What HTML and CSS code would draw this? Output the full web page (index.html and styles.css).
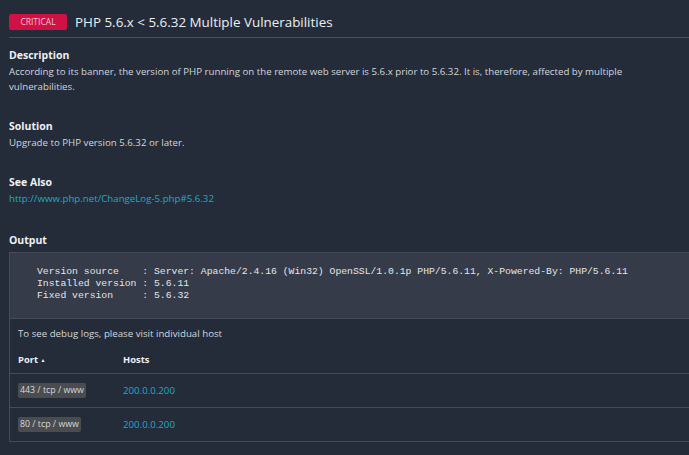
FILE: index.html
```html
<!DOCTYPE html>
<html>
<head>
<meta charset="utf-8">
<link rel="stylesheet" href="styles.css">
</head>
<body>
<div class="page">
  <div class="header">
    <span class="badge">CRITICAL</span>
    <h1 class="title">PHP 5.6.x &lt; 5.6.32 Multiple Vulnerabilities</h1>
  </div>

  <section class="section sec-desc">
    <h2 class="heading">Description</h2>
    <p class="text">According to its banner, the version of PHP running on the remote web server is 5.6.x prior to 5.6.32. It is, therefore, affected by multiple<br>vulnerabilities.</p>
  </section>

  <section class="section sec-sol">
    <h2 class="heading">Solution</h2>
    <p class="text">Upgrade to PHP version 5.6.32 or later.</p>
  </section>

  <section class="section sec-see">
    <h2 class="heading">See Also</h2>
    <p class="text"><a class="link" href="#">http://www.php.net/ChangeLog-5.php#5.6.32</a></p>
  </section>

  <section class="section sec-out">
    <h2 class="heading">Output</h2>
    <div class="output">
<pre class="code">Version source    : Server: Apache/2.4.16 (Win32) OpenSSL/1.0.1p PHP/5.6.11, X-Powered-By: PHP/5.6.11
Installed version : 5.6.11
Fixed version     : 5.6.32</pre>
      <div class="hostbox">
        <p class="note">To see debug logs, please visit individual host</p>
        <div class="table">
          <div class="row head">
            <div class="col-port">Port <span class="sort">&#9650;</span></div>
            <div class="col-host">Hosts</div>
          </div>
          <div class="row">
            <div class="col-port"><span class="port">443 / tcp / www</span></div>
            <div class="col-host"><a class="link" href="#">200.0.0.200</a></div>
          </div>
          <div class="row">
            <div class="col-port"><span class="port">80 / tcp / www</span></div>
            <div class="col-host"><a class="link" href="#">200.0.0.200</a></div>
          </div>
        </div>
      </div>
    </div>
  </section>
</div>
</body>
</html>
```

FILE: styles.css
```css
html, body {
  margin: 0;
  padding: 0;
  background: #242c3a;
  overflow: hidden;
}
body {
  font-family: "Open Sans", "Noto Sans", sans-serif;
  color: #d8dbe0;
}
.page {
  width: 800px;
  padding-left: 9px;
}
.header {
  display: flex;
  align-items: center;
  height: 38px;
  border-bottom: 1px solid #48505c;
  box-sizing: border-box;
  padding-top: 6px;
}
.badge {
  display: inline-flex;
  align-items: center;
  justify-content: center;
  width: 58px;
  height: 16px;
  background: #d01146;
  color: #f1c6d2;
  font-size: 8.5px;
  border-radius: 2px;
}
.title {
  margin: 0 0 0 8px;
  font-size: 13.4px;
  font-weight: 400;
  color: #eceef1;
}
.section {
  margin: 0;
}
.heading {
  margin: 0;
  font-size: 10.5px;
  font-weight: 700;
  color: #eef0f3;
  line-height: 16px;
}
.text {
  margin: 1px 0 0;
  font-size: 9.7px;
  line-height: 15px;
  color: #d3d6db;
}
.sec-desc { padding-top: 9px; }
.sec-sol { padding-top: 24px; }
.sec-see { padding-top: 24px; }
.sec-out { padding-top: 26px; }
.link {
  color: #22a8c4;
  text-decoration: none;
}
.output {
  margin-top: 4px;
  border: 1px solid #454c57;
}
.code {
  margin: 0;
  background: #353b48;
  padding: 13px 27px 16px;
  font-family: "Liberation Mono", monospace;
  font-size: 9.75px;
  line-height: 12px;
  color: #e4e6ea;
  border-bottom: 1px solid #454c57;
}
.note {
  margin: 0;
  padding: 8px 8px 0;
  font-size: 9.7px;
  line-height: 14px;
  color: #d3d6db;
}
.row {
  display: flex;
  align-items: center;
  height: 34px;
  box-sizing: border-box;
  border-top: 1px solid #454c57;
  font-size: 9.7px;
}
.row.head {
  border-top: none;
  height: 32px;
  padding-top: 4px;
  font-weight: 700;
  font-size: 9.4px;
  color: #eef0f3;
}
.col-port {
  width: 105px;
  padding-left: 8px;
}
.sort {
  font-size: 5px;
  vertical-align: 1px;
}
.port {
  display: inline-block;
  background: #4a4c50;
  color: #d6d8dc;
  padding: 1px 2px;
  border-radius: 2px;
  line-height: 13px;
  font-size: 8.8px;
}
```
